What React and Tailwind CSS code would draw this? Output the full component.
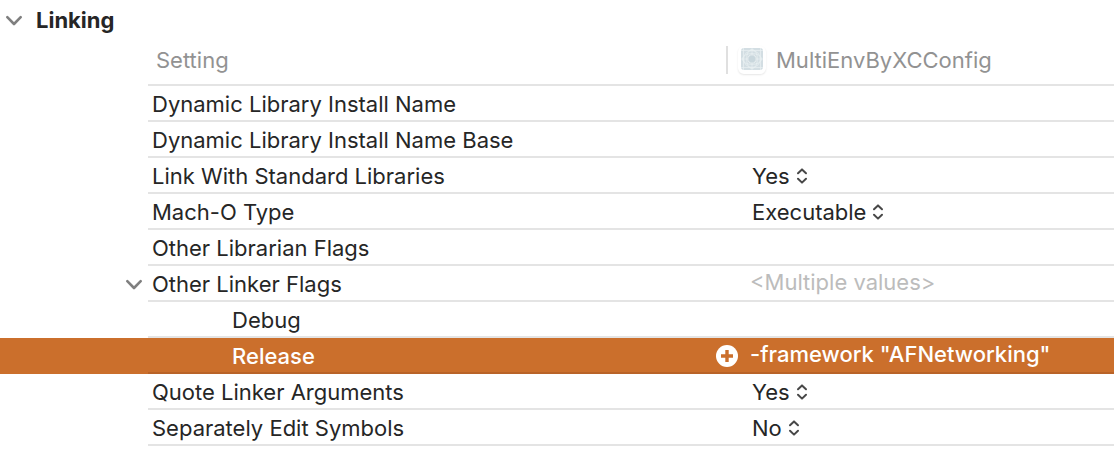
import { useState } from "react";

const SETTINGS = [
  { name: "Dynamic Library Install Name" },
  { name: "Dynamic Library Install Name Base" },
  { name: "Link With Standard Libraries", value: "Yes", options: ["Yes", "No"] },
  { name: "Mach-O Type", value: "Executable", options: ["Executable", "Bundle"] },
  { name: "Other Librarian Flags" },
  {
    name: "Other Linker Flags",
    placeholder: "<Multiple values>",
    children: [
      { name: "Debug" },
      { name: "Release", text: '-framework "AFNetworking"', selected: true },
    ],
  },
  { name: "Quote Linker Arguments", value: "Yes", options: ["Yes", "No"] },
  { name: "Separately Edit Symbols", value: "No", options: ["Yes", "No"] },
];

function Disclosure({ label, open, onToggle }) {
  return (
    <button
      type="button"
      aria-label={label}
      aria-expanded={open}
      onClick={onToggle}
      className="flex size-5 shrink-0 items-center justify-center text-[#7f7f7f]"
    >
      <svg
        viewBox="0 0 20 20"
        className={open ? "size-5" : "size-5 -rotate-90"}
        fill="none"
        stroke="currentColor"
        strokeWidth="2.6"
        strokeLinecap="round"
        strokeLinejoin="round"
      >
        <path d="M3.3 7.2 10 14 16.7 7.2" />
      </svg>
    </button>
  );
}

function UpDown() {
  return (
    <svg
      viewBox="0 0 12 18"
      className="pointer-events-none -ml-4 h-[18px] w-3 shrink-0"
      fill="none"
      stroke="#484848"
      strokeWidth="2"
      strokeLinecap="round"
      strokeLinejoin="round"
      aria-hidden="true"
    >
      <path d="M2 6.2 6 2.4 10 6.2M2 11.8 6 15.6 10 11.8" />
    </svg>
  );
}

function TargetIcon() {
  return (
    <span className="flex size-7 justify-center rounded-md bg-white pt-0.5 shadow-[0_1px_2px_rgba(0,0,0,0.1)]">
      <svg viewBox="0 0 22 22" className="size-[22px]" fill="none" aria-hidden="true">
        <rect width="22" height="22" rx="3" fill="#d3dee3" />
        <g stroke="#eaf0f2" strokeWidth="0.7">
          <path d="M2.5 0V22M19.5 0V22M0 2.5H22M0 19.5H22M11 0V6M11 16V22M0 11H6M16 11H22" />
          <ellipse cx="11" cy="11" rx="9.6" ry="5.4" />
          <ellipse cx="11" cy="11" rx="5.4" ry="9.6" />
          <circle cx="11" cy="11" r="8.4" />
        </g>
        <circle cx="11" cy="11" r="4.2" fill="#c9d7dd" stroke="#eaf0f2" strokeWidth="1" />
      </svg>
    </span>
  );
}

function AddButton() {
  return (
    <button type="button" aria-label="Add condition" className="-ml-2.5 mr-3 shrink-0">
      <svg viewBox="0 0 22 22" className="block size-[22px]" aria-hidden="true">
        <circle cx="11" cy="11" r="11" fill="#fff" />
        <path d="M11 5V17M5 11H17" stroke="#cb6f2c" strokeWidth="3.4" />
      </svg>
    </button>
  );
}

function Value({ row }) {
  if (row.options) {
    return (
      <div className="flex h-full items-center pl-[26px]">
        <select
          aria-label={row.name}
          defaultValue={row.value}
          className="field-sizing-content appearance-none bg-transparent pr-[22px]"
        >
          {row.options.map((o) => (
            <option key={o}>{o}</option>
          ))}
        </select>
        <UpDown />
      </div>
    );
  }
  if (row.placeholder) {
    return <div className="flex h-full items-center pb-1 pl-6 text-[#bcbcbc]">{row.placeholder}</div>;
  }
  if (row.text) {
    return (
      <div className="flex h-full items-center font-medium">
        <AddButton />
        <span className="pb-1">{row.text}</span>
      </div>
    );
  }
  return null;
}

function Row({ row, child, open, onToggle }) {
  const line = row.selected ? "border-[#b96328]" : "border-[#e4e4e4]";
  return (
    <tr className={row.selected ? "bg-[#cb6f2c] text-white" : ""}>
      <td className="p-0">
        {row.children && (
          <div className="flex justify-end pr-1">
            <Disclosure label={row.name} open={open} onToggle={onToggle} />
          </div>
        )}
      </td>
      <th
        scope="row"
        className={`h-9 border-b-2 p-0 pt-0.5 text-left ${line} ${child ? "pl-[84px]" : "pl-1"} ${
          row.selected ? "font-medium" : "font-normal"
        }`}
      >
        {row.name}
      </th>
      <td className={`h-9 border-b-2 p-0 pt-0.5 ${line}`}>
        <Value row={row} />
      </td>
    </tr>
  );
}

export default function App() {
  const [sectionOpen, setSectionOpen] = useState(true);
  const [flagsOpen, setFlagsOpen] = useState(true);

  return (
    <main className="min-h-screen bg-white font-['Inter','Liberation_Sans',sans-serif] text-[22px] leading-7 text-[#262626]">
      <header className="flex h-10 items-center gap-3 pl-1">
        <Disclosure label="Linking" open={sectionOpen} onToggle={() => setSectionOpen(!sectionOpen)} />
        <h2 className="font-bold">Linking</h2>
      </header>
      {sectionOpen && (
        <table className="w-full table-fixed border-separate border-spacing-0">
          <colgroup>
            <col className="w-[148px]" />
            <col className="w-[578px]" />
            <col />
          </colgroup>
          <thead>
            <tr className="text-left text-[#929292]">
              <td className="p-0" />
              <th scope="col" className="h-[46px] border-b-2 border-[#e4e4e4] p-0 pb-1 pl-2 font-normal">
                Setting
              </th>
              <th scope="col" className="h-[46px] border-b-2 border-[#e4e4e4] p-0 pb-1 font-normal">
                <div className="flex h-7 items-center gap-2.5 border-l-2 border-[#e0e0e0] pl-2.5">
                  <TargetIcon />
                  MultiEnvByXCConfig
                </div>
              </th>
            </tr>
          </thead>
          <tbody>
            {SETTINGS.flatMap((row) => [
              <Row
                key={row.name}
                row={row}
                open={flagsOpen}
                onToggle={() => setFlagsOpen(!flagsOpen)}
              />,
              ...(row.children && flagsOpen
                ? row.children.map((c) => <Row key={c.name} row={c} child />)
                : []),
            ])}
          </tbody>
        </table>
      )}
    </main>
  );
}
